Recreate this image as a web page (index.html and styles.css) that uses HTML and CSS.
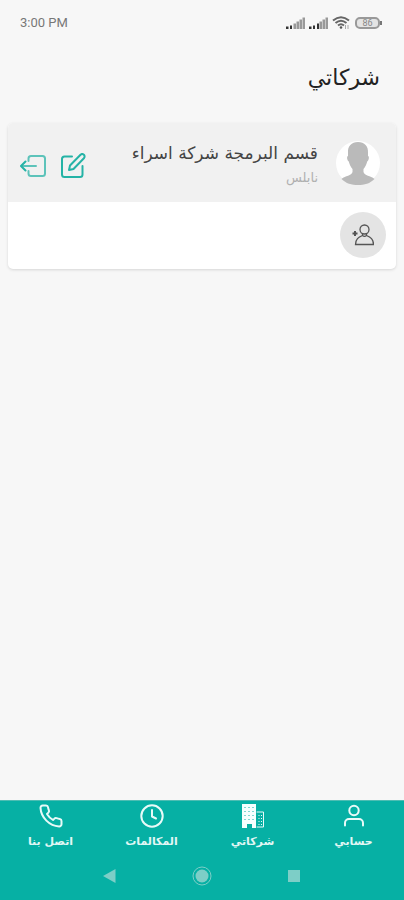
FILE: index.html
```html
<!DOCTYPE html>
<html lang="ar" dir="rtl">
<head>
<meta charset="utf-8">
<meta name="viewport" content="width=device-width, initial-scale=1">
<title>شركاتي</title>
<link rel="stylesheet" href="styles.css">
</head>
<body>
<div class="status" dir="ltr">
  <span class="time">3:00 PM</span>
  <div class="indicators">
    <svg class="signal" width="19" height="12" viewBox="0 0 19 12" aria-hidden="true"><path class="dark" d="M0 9.500h2.500V12H0zM4 8.500h2V12H4z"/><path d="M7.500 6.500H10V12H7.500zM10.500 4.500H13V12h-2.500zM13.500 2.500H16V12h-2.500zM16.500 .5H19V12h-2.500z"/></svg>
    <svg class="signal" width="19" height="12" viewBox="0 0 19 12" aria-hidden="true"><path class="dark" d="M0 9.500h2.500V12H0zM4 8.500h2V12H4zM8 6.500h2V12H8z"/><path d="M10.500 4.500H13V12h-2.500zM13.500 2.500H16V12h-2.500zM16.500 .5H19V12h-2.500z"/></svg>
    <svg class="wifi" width="18" height="14" viewBox="0 0 18 14" aria-hidden="true"><path d="M1 4.500Q9-2 17 4.500M3.500 7Q9 2.500 14.500 7M6 9.500Q9 7 12 9.500"/><circle cx="9" cy="11.500" r="1.300"/><path class="arrows" d="M13.500 9v4M16 9v4"/></svg>
    <span class="battery">86</span>
  </div>
</div>

<header class="heading"><h1>شركاتي</h1></header>

<main class="content">
  <section class="card">
    <div class="company">
      <svg class="avatar" viewBox="0 0 44 44" aria-hidden="true"><circle cx="22" cy="22" r="22" fill="#fff"/><path d="M22 1c-6.500 0-10.500 4-10 11v3c-1.500 0-1 4.500.8 5.500.8 3.500 2 5.500 3.700 7.500v3c-1 4-7 3.500-11 7C10 42.500 15.500 44 22 44s12-1.500 16.500-6c-4-3.500-10-3-11-7v-3c1.700-2 2.900-4 3.700-7.500 1.800-1 2.300-5.500.8-5.500v-3c.5-7-3.500-11-10-11z" fill="#bababa"/></svg>
      <div class="details">
        <h2>قسم البرمجة شركة اسراء</h2>
        <p>نابلس</p>
      </div>
      <div class="actions">
        <button type="button" aria-label="تعديل"><svg width="26" height="26" viewBox="0 0 26 26"><path d="M12 3.500H4.500A2.500 2.500 0 0 0 2 6v15.500A2.500 2.500 0 0 0 4.500 24H20a2.500 2.500 0 0 0 2.500-2.500V13"/><path d="M20.500 1.800a2.300 2.300 0 0 1 3.400 3.400L13.500 16 9 17l1-4.500z"/></svg></button>
        <button type="button" aria-label="خروج"><svg width="26" height="26" viewBox="0 0 26 26"><path class="frame" d="M8.500 8V5.500A2.500 2.500 0 0 1 11 3h11.500A2.500 2.500 0 0 1 25 5.500v15a2.500 2.500 0 0 1-2.500 2.500H11a2.500 2.500 0 0 1-2.500-2.500V18M16 13H2"/><path d="M5.500 8.500L1 13l4.500 4.500"/></svg></button>
      </div>
    </div>
    <div class="add-row">
      <button type="button" class="add" aria-label="إضافة شخص"><svg width="22" height="22" viewBox="0 0 22 22"><circle cx="12.500" cy="5.500" r="4.500"/><path d="M10.500 9.500v2M14.500 9.500v2M3.500 20.500c0-5.500 3-7.300 7-9 1 .8 3 .8 4 0 4 1.700 7 3.500 7 9z"/><path class="plus" d="M.5 9.500h5M3 7v5"/></svg></button>
    </div>
  </section>
</main>

<footer class="bottom">
  <nav class="tabs">
    <a href="#account"><svg width="24" height="24" viewBox="0 0 24 24"><circle cx="12" cy="6.500" r="4.700"/><path d="M3 21.500V19a4 4 0 0 1 4-4h10a4 4 0 0 1 4 4v2.500"/></svg><span>حسابي</span></a>
    <a href="#companies" aria-current="page"><svg class="building" width="24" height="24" viewBox="0 0 24 24"><path class="solid" d="M1 0h14v24h-4v-4H6v4H1z"/><path class="windows" d="M4 3v15M8 3v15M12 3v15"/><path class="annex" d="M16 8h6.500v15H16"/><path class="annex-windows" d="M18 11v10M20.500 11v10"/></svg><span>شركاتي</span></a>
    <a href="#calls"><svg width="24" height="24" viewBox="0 0 24 24"><circle cx="12" cy="12" r="10.700"/><path d="M12 6v6.500l4 2"/></svg><span>المكالمات</span></a>
    <a href="#contact"><svg width="24" height="24" viewBox="0 0 24 24"><path d="M22.500 17v3.200a2.200 2.200 0 0 1-2.400 2.200C10.500 22 2 13.500 1.500 3.900A2.200 2.200 0 0 1 3.700 1.500H7a2 2 0 0 1 2 1.700c.2 1.200.5 2.200.9 3.200a2 2 0 0 1-.5 2.200L8 10a17 17 0 0 0 6 6l1.400-1.400a2 2 0 0 1 2.200-.5c1 .4 2 .7 3.200.9a2 2 0 0 1 1.700 2z"/></svg><span>اتصل بنا</span></a>
  </nav>
  <div class="system" dir="ltr">
    <button type="button" aria-label="رجوع"><svg width="20" height="20" viewBox="0 0 20 20"><path d="M15.500 3v14L3 10z"/></svg></button>
    <button type="button" aria-label="الرئيسية"><svg width="20" height="20" viewBox="0 0 20 20"><circle cx="10" cy="10" r="6.500"/><circle class="ring" cx="10" cy="10" r="9"/></svg></button>
    <button type="button" aria-label="التطبيقات الأخيرة"><svg width="20" height="20" viewBox="0 0 20 20"><path d="M4 4h12v12H4z"/></svg></button>
  </div>
</footer>
</body>
</html>
```
FILE: styles.css
```css
* {
  box-sizing: border-box;
}

body {
  display: flex;
  flex-direction: column;
  min-height: 100vh;
  margin: 0;
  background: #f7f7f7;
  color: #333;
  font-family: "DejaVu Sans", sans-serif;
}

h1,
h2,
p {
  margin: 0;
  font-weight: 400;
}

button {
  display: flex;
  align-items: center;
  justify-content: center;
  padding: 0;
  border: 0;
  background: none;
}

svg {
  display: block;
  flex: none;
}

.status {
  display: flex;
  align-items: center;
  justify-content: space-between;
  height: 46px;
  padding: 0 24px 0 20px;
}

.time {
  color: #777;
  font: 400 13px/16px Roboto, sans-serif;
}

.indicators {
  display: flex;
  align-items: center;
  gap: 4px;
}

.signal {
  fill: #999;
}

.signal .dark {
  fill: #333;
}

.wifi {
  fill: #555;
}

.wifi path {
  fill: none;
  stroke: #666;
  stroke-width: 2;
}

.wifi .arrows {
  stroke: #aaa;
  stroke-width: 1;
}

.battery {
  position: relative;
  width: 25px;
  height: 12px;
  margin-left: 1px;
  border: 2px solid #999;
  border-radius: 5px;
  background: #e4e4e4;
  color: #888;
  font: 9px/8px Roboto, sans-serif;
  text-align: center;
}

.battery::after {
  content: "";
  position: absolute;
  top: 2px;
  right: -4px;
  width: 2px;
  height: 4px;
  background: #777;
}

.heading {
  padding: 16px 24px;
}

.heading h1 {
  color: #222;
  font-size: 22px;
  line-height: 32px;
}

.content {
  flex: 1;
  padding: 13px 8px;
}

.card {
  overflow: hidden;
  border-radius: 5px;
  background: #fff;
  box-shadow: 0 1px 3px #0002;
}

.company {
  display: flex;
  align-items: center;
  min-height: 79px;
  padding: 0 16px 0 12px;
  background: #f1f1f1;
}

.avatar {
  width: 44px;
  height: 44px;
}

.details {
  flex: 1;
  min-width: 0;
  padding: 4px 18px 0 0;
}

.details h2 {
  color: #444;
  font-size: 17px;
  line-height: 26px;
  white-space: nowrap;
}

.details p {
  color: #b0b0b0;
  font-size: 13px;
  line-height: 24px;
}

.actions {
  display: flex;
  gap: 14px;
  padding-top: 6px;
}

.actions svg {
  fill: none;
  stroke: #25b3a6;
  stroke-width: 2;
  stroke-linecap: round;
  stroke-linejoin: round;
}

.actions .frame {
  stroke: #5dc3ba;
}

.add-row {
  padding: 10px 10px 11px;
}

.add {
  width: 46px;
  height: 46px;
  border-radius: 50%;
  background: #e4e4e4;
}

.add svg {
  fill: none;
  stroke: #555;
  stroke-width: 1.300;
}

.add .plus {
  stroke-width: 2;
}

.bottom {
  border-top: 1px solid #4dbdb3;
  background: #06b0a4;
}

.tabs {
  display: grid;
  grid-template-columns: repeat(4, 1fr);
  padding-top: 3px;
}

.tabs a {
  display: flex;
  flex-direction: column;
  align-items: center;
  gap: 4px;
  color: #e2f7f5;
  font-size: 11px;
  font-weight: 700;
  line-height: 20px;
  text-decoration: none;
}

.tabs svg {
  fill: none;
  stroke: #e8faf8;
  stroke-width: 2;
  stroke-linecap: round;
  stroke-linejoin: round;
}

.building .solid {
  fill: #f5fffe;
  stroke: none;
}

.building .windows {
  stroke: #06b0a4;
  stroke-width: 1;
  stroke-dasharray: 1 3;
  stroke-linecap: butt;
}

.building .annex {
  stroke-width: 1;
}

.building .annex-windows {
  stroke-width: 1;
  stroke-dasharray: 1 2;
  stroke-linecap: butt;
}

.system {
  display: flex;
  justify-content: center;
  gap: 72px;
  padding: 14px 0;
}

.system svg {
  fill: #7dcec7;
}

.system .ring {
  fill: none;
  stroke: #7dcec7;
}
```
